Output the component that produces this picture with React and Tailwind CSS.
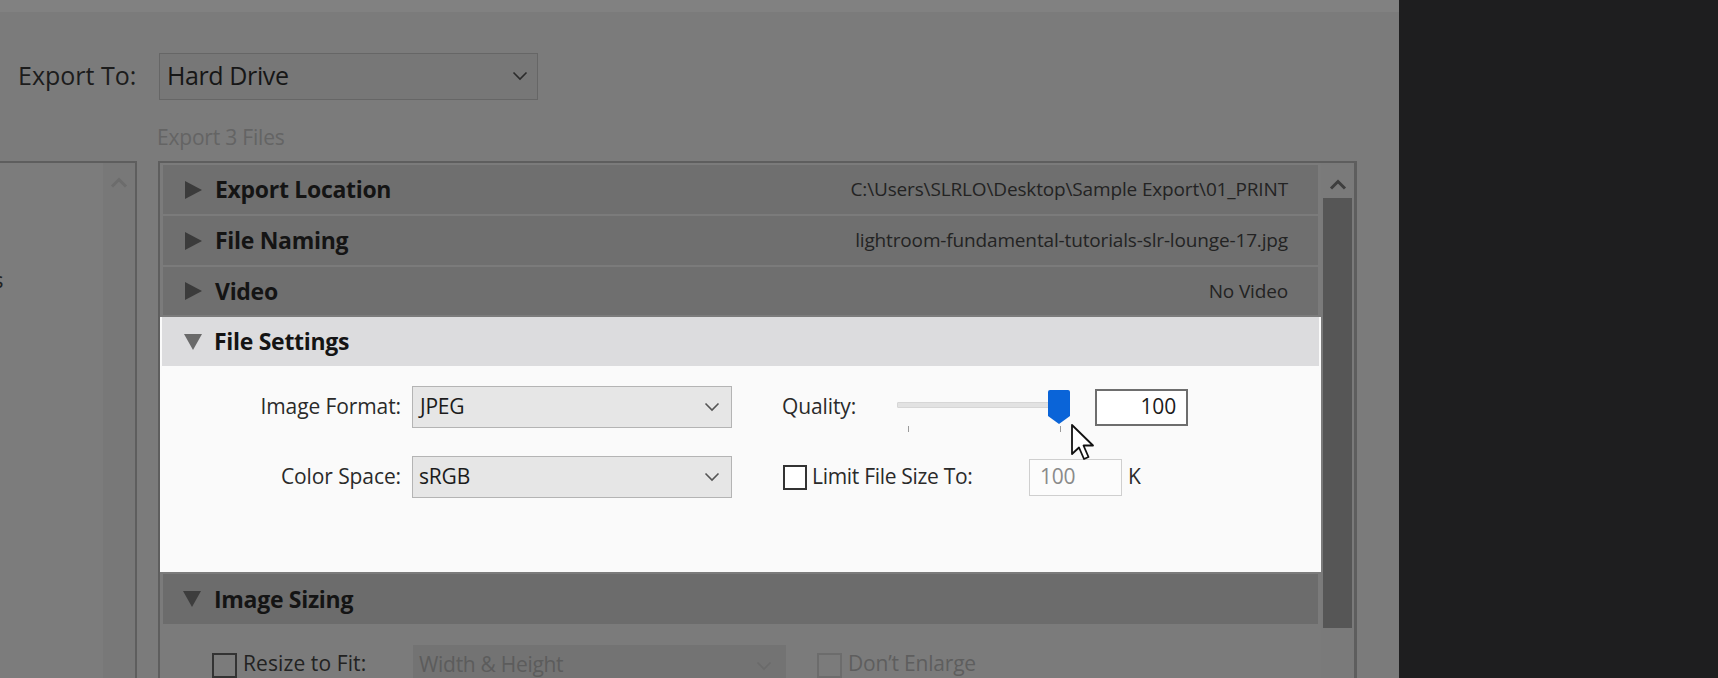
import React from "react";

const F = { fontFamily: '"Open Sans", "Noto Sans", sans-serif' };

function Chevron({ color = "#333", className = "" }) {
  return (
    <svg className={className} width="16" height="10" viewBox="0 0 16 10">
      <polyline points="1.5,1.5 8,8 14.5,1.5" fill="none" stroke={color} strokeWidth="1.6" />
    </svg>
  );
}

function TriRight({ color = "#3b3b3b" }) {
  return (
    <svg width="20" height="20" viewBox="0 0 20 20" className="shrink-0">
      <polygon points="2,1 19,10 2,19" fill={color} />
    </svg>
  );
}

function TriDown({ color = "#6b6b6b" }) {
  return (
    <svg width="20" height="18" viewBox="0 0 20 18" className="shrink-0">
      <polygon points="1,1 19,1 10,17" fill={color} />
    </svg>
  );
}

function Caret({ color = "#444" }) {
  return (
    <svg width="18" height="11" viewBox="0 0 18 11" className="shrink-0">
      <polyline points="2,9.5 9,2.5 16,9.5" fill="none" stroke={color} strokeWidth="3" />
    </svg>
  );
}

function Header({ title, value }) {
  return (
    <div className="h-[49px] shrink-0 mx-[3px] bg-[#6f6f6f] flex items-center pl-[20px] pr-[30px]">
      <TriRight />
      <span className="ml-[12px] text-[23px] font-bold text-[#141414] tracking-[-0.3px]">{title}</span>
      <span className="ml-auto text-[19px] text-[#232323] tracking-[-0.15px]">{value}</span>
    </div>
  );
}

export default function App() {
  return (
    <div className="w-[1718px] h-[678px] flex overflow-hidden" style={F}>
      <div className="w-[1399px] shrink-0 bg-[#7b7b7b] flex flex-col">
        <div className="h-[12px] shrink-0 bg-[#818181]" />
        <div className="flex items-center mt-[41px] h-[46px] shrink-0">
          <span className="ml-[18px] w-[141px] text-[25px] text-[#1c1c1c] tracking-[0px]">Export To:</span>
          <div className="w-[379px] h-[47px] border border-[#666] bg-[#777] flex items-center pl-[7px] pr-[9px]">
            <span className="text-[25px] text-[#161616] tracking-[-0.4px]">Hard Drive</span>
            <Chevron className="ml-auto" color="#2b2b2b" />
          </div>
        </div>
        <div className="ml-[157px] mt-[23px] shrink-0 text-[21px] text-[#646464] tracking-[-0.2px] leading-[30px]">Export 3 Files</div>
        <div className="flex mt-[9px] flex-1 min-h-0">
          {/* left list box */}
          <div className="w-[137px] shrink-0 border-t-2 border-r-2 border-[#5e5e5e] flex relative">
            <div className="w-[103px] bg-[#7c7c7c]">
              <span className="absolute left-[-7px] top-[100px] text-[22px] text-[#222]">s</span>
            </div>
            <div className="flex-1 bg-[#787878] flex justify-center pt-[14px]">
              <Caret color="#6c6c6c" />
            </div>
          </div>
          {/* main box */}
          <div className="ml-[21px] w-[1199px] shrink-0 border-t-2 border-l-2 border-r-[3px] border-[#5e5e5e] flex">
            <div className="flex-1 flex flex-col gap-[2px] pt-[2px] bg-[#7b7b7b] overflow-hidden">
              <Header title="Export Location" value={"C:\\Users\\SLRLO\\Desktop\\Sample Export\\01_PRINT"} />
              <Header title="File Naming" value="lightroom-fundamental-tutorials-slr-lounge-17.jpg" />
              <div className="h-[48px] shrink-0 mx-[3px] bg-[#6f6f6f] flex items-center pl-[20px] pr-[30px]">
                <TriRight />
                <span className="ml-[12px] text-[23px] font-bold text-[#141414] tracking-[-0.3px]">Video</span>
                <span className="ml-auto text-[19px] text-[#232323] tracking-[-0.15px]">No Video</span>
              </div>
              <div className="bg-[#fafafa] h-[255px] shrink-0 flex flex-col">
                <div className="h-[49px] shrink-0 mx-[2px] bg-[#dcdcde] flex items-center pl-[21px]">
                  <TriDown color="#6a6a6a" />
                  <span className="ml-[11px] text-[23px] font-bold text-[#141414] tracking-[-0.3px]">File Settings</span>
                </div>
                <div className="flex mt-[20px] h-[42px] shrink-0 items-center">
                  <span className="w-[241px] text-right text-[21px] text-[#2a2a2a] tracking-[-0.1px]">Image Format:</span>
                  <div className="ml-[11px] w-[320px] h-[42px] border border-[#b4b4b4] bg-[#e6e6e6] flex items-center pl-[7px] pr-[11px]">
                    <span className="text-[21px] text-[#1b1b1b] tracking-[-0.2px]">JPEG</span>
                    <Chevron className="ml-auto" color="#555" />
                  </div>
                  <span className="ml-[50px] w-[115px] text-[21px] text-[#2a2a2a] tracking-[-0.1px]">Quality:</span>
                  <div className="relative w-[173px] h-[42px]">
                    <div className="absolute left-0 right-[10px] top-[16px] h-[6px] bg-[#e2e2e2] border border-[#d6d6d6] rounded-[1px]" />
                    <div className="absolute left-[11px] top-[40px] w-[1px] h-[6px] bg-[#9a9a9a]" />
                    <div className="absolute left-[163px] top-[40px] w-[1px] h-[6px] bg-[#9a9a9a]" />
                    <svg className="absolute left-[151px] top-[4px]" width="22" height="34" viewBox="0 0 22 34">
                      <path d="M2,0 H20 Q22,0 22,2 V26 L11,34 L0,26 V2 Q0,0 2,0 Z" fill="#0a64d8" />
                    </svg>
                  </div>
                  <div className="ml-[25px] w-[93px] h-[37px] border-2 border-[#6e6e6e] bg-white flex items-center justify-end pr-[10px]">
                    <span className="text-[21px] text-[#1b1b1b] tracking-[-0.2px]">100</span>
                  </div>
                </div>
                <div className="flex mt-[28px] h-[42px] shrink-0 items-center">
                  <span className="w-[241px] text-right text-[21px] text-[#2a2a2a] tracking-[-0.1px]">Color Space:</span>
                  <div className="ml-[11px] w-[320px] h-[42px] border border-[#b4b4b4] bg-[#e6e6e6] flex items-center pl-[6px] pr-[11px]">
                    <span className="text-[21px] text-[#1b1b1b] tracking-[-0.2px]">sRGB</span>
                    <Chevron className="ml-auto" color="#555" />
                  </div>
                  <div className="ml-[51px] w-[24px] h-[25px] border-2 border-[#333] bg-white shrink-0" />
                  <span className="pl-[5px] w-[222px] text-[21px] text-[#2a2a2a] tracking-[-0.3px]">Limit File Size To:</span>
                  <div className="w-[93px] h-[37px] border border-[#cfcfcf] bg-[#fcfcfc] flex items-center pl-[10px]">
                    <span className="text-[21px] text-[#8a8a8a] tracking-[-0.2px]">100</span>
                  </div>
                  <span className="ml-[6px] text-[21px] text-[#2a2a2a]">K</span>
                </div>
              </div>
              <div className="h-[50px] shrink-0 mx-[3px] bg-[#6c6c6c] flex items-center pl-[19px]">
                <TriDown color="#3d3d3d" />
                <span className="ml-[12px] text-[23px] font-bold text-[#141414] tracking-[-0.3px]">Image Sizing</span>
              </div>
              <div className="flex items-start pt-[19px] shrink-0">
                <div className="ml-[52px] mt-[8px] w-[25px] h-[25px] border-2 border-[#333] shrink-0" />
                <span className="pl-[6px] w-[176px] mt-[3px] text-[21px] text-[#222] tracking-[0.1px]">Resize to Fit:</span>
                <div className="w-[373px] h-[50px] bg-[#737373] flex pl-[6px] pr-[14px] pt-[4px]">
                  <span className="text-[21px] text-[#5c5c5c] tracking-[-0.3px]">Width &amp; Height</span>
                  <Chevron className="ml-auto mt-[12px]" color="#6a6a6a" />
                </div>
                <div className="ml-[31px] mt-[8px] w-[25px] h-[25px] border-2 border-[#6c6c6c] shrink-0" />
                <span className="ml-[6px] mt-[3px] text-[21px] text-[#5e5e5e] tracking-[-0.2px]">Don’t Enlarge</span>
              </div>
            </div>
            <div className="w-[33px] bg-[#7a7a7a] flex flex-col items-center pt-[16px] overflow-hidden">
              <Caret color="#3e3e3e" />
              <div className="mt-[8px] w-[29px] h-[430px] shrink-0 bg-[#565656]" />
            </div>
          </div>
        </div>
      </div>
      <div className="flex-1 bg-[#1e1e1f]" />
      {/* mouse cursor */}
      <svg className="absolute left-[1070px] top-[423px]" width="26" height="40" viewBox="0 0 26 40">
        <path d="M2,2 L2,31 L9,24.5 L14,36 L18.5,34 L13.5,22.5 L23,22.5 Z" fill="#ffffff" stroke="#111" strokeWidth="1.8" strokeLinejoin="round" />
      </svg>
    </div>
  );
}
